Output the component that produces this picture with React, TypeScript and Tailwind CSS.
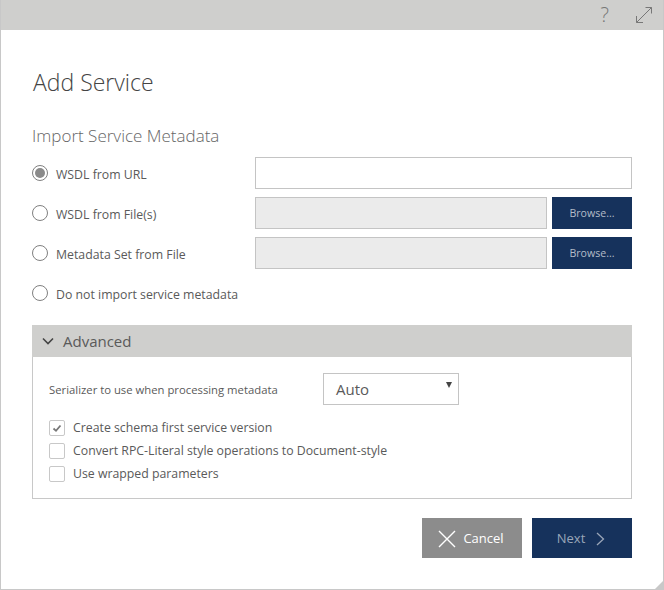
const font = { fontFamily: '"Open Sans", "Noto Sans", sans-serif' };

function Radio({ checked = false }: { checked?: boolean }) {
  return (
    <span className="flex h-4 w-4 shrink-0 items-center justify-center rounded-full border border-[#808080] bg-white">
      {checked && <span className="h-2.5 w-2.5 rounded-full bg-[#8a8a8a]" />}
    </span>
  );
}

function RadioRow({ label, checked, children }: { label: string; checked?: boolean; children?: React.ReactNode }) {
  return (
    <div className="flex h-8 items-center">
      <div className="flex w-[223px] shrink-0 items-center gap-2">
        <Radio checked={checked} />
        <span className="pt-[5px] text-[12.3px] text-[#5a5a5a]">{label}</span>
      </div>
      {children}
    </div>
  );
}

function FileRow({ label }: { label: string }) {
  return (
    <RadioRow label={label}>
      <div className="h-8 w-[292px] border border-[#c4c4c4] bg-[#ebebeb]" />
      <div className="ml-[5px] flex h-8 w-20 items-center justify-center bg-[#16325c] pt-[2px] text-[10.6px] text-[#b4bcc8]">Browse...</div>
    </RadioRow>
  );
}

function Check({ label, checked }: { label: string; checked?: boolean }) {
  return (
    <div className="flex h-[23px] items-center gap-2">
      <span className="flex h-4 w-4 shrink-0 items-center justify-center rounded-[2px] border border-[#c8c8c8] bg-white">
        {checked && (
          <svg width="10" height="10" viewBox="0 0 10 10" fill="none">
            <path d="M1.5 5.5 L4 7.8 L8.5 2.5" stroke="#777" strokeWidth="1.8" />
          </svg>
        )}
      </span>
      <span className="pt-[1px] text-[12.3px] text-[#5a5a5a]">{label}</span>
    </div>
  );
}

export default function App() {
  return (
    <div style={font} className="relative flex h-[590px] w-[664px] flex-col overflow-hidden border-b border-l border-r border-[#c8c8c8] bg-white">
      <div className="-mx-px flex h-[30px] shrink-0 items-center justify-end bg-[#cfcfcd] pr-[11px]">
        <span className="mr-[26px] text-[20px] font-light leading-none text-[#777]">?</span>
        <svg width="18" height="18" viewBox="0 0 18 18" fill="none" stroke="#777" strokeWidth="1">
          <path d="M1.5 16.5 L16.5 1.5 M10.5 1.5 H16.5 V7.5 M1.5 10 V16.5 H8" />
        </svg>
      </div>
      <div className="flex flex-1 flex-col px-[31px]">
        <h1 className="mt-[34px] pl-px text-[23px] font-light leading-9 text-[#444]">Add Service</h1>
        <h2 className="mt-[24px] text-[17px] font-light leading-6 text-[#666]">Import Service Metadata</h2>
        <div className="mt-[9px] flex flex-col gap-2">
          <RadioRow label="WSDL from URL" checked>
            <div className="h-8 w-[377px] border border-[#c4c4c4] bg-white" />
          </RadioRow>
          <FileRow label="WSDL from File(s)" />
          <FileRow label="Metadata Set from File" />
          <RadioRow label="Do not import service metadata" />
        </div>
        <div className="mt-4 flex h-8 items-center gap-2 bg-[#cfcfcd] pl-[9px]">
          <svg width="14" height="14" viewBox="0 0 14 14" fill="none" stroke="#444" strokeWidth="1.6">
            <path d="M2 4.5 L7 9.5 L12 4.5" />
          </svg>
          <span className="text-[15px] text-[#5a5a5a]">Advanced</span>
        </div>
        <div className="flex h-[142px] flex-col border-x border-b border-[#c8c8c8] px-4 pt-4">
          <div className="flex h-8 items-center">
            <span className="w-[274px] shrink-0 pt-[3px] text-[11.3px] text-[#5a5a5a]">Serializer to use when processing metadata</span>
            <div className="relative flex h-8 w-[136px] items-center border border-[#c4c4c4] pl-[12px] pt-[1px] text-[15px] text-[#5a5a5a]">
              Auto
              <span className="absolute right-[6px] top-[8px] h-0 w-0 border-x-[3.5px] border-t-[6px] border-x-transparent border-t-[#444]" />
            </div>
          </div>
          <div className="mt-[11px] flex flex-col">
            <Check label="Create schema first service version" checked />
            <Check label="Convert RPC-Literal style operations to Document-style" />
            <Check label="Use wrapped parameters" />
          </div>
        </div>
        <div className="mt-[19px] flex justify-end gap-2.5">
          <div className="flex h-10 w-[100px] items-center justify-center gap-[7px] bg-[#8c8c8c] pr-[2px] pt-[1px] text-[13px] text-white">
            <svg width="18" height="18" viewBox="0 0 18 18" fill="none" stroke="#fff" strokeWidth="1.4">
              <path d="M1 1 L17 17 M17 1 L1 17" />
            </svg>
            Cancel
          </div>
          <div className="flex h-10 w-[100px] items-center justify-center gap-[11px] bg-[#16325c] pr-[2px] pt-[1px] text-[13px] text-[#9aa6b8]">
            Next
            <svg width="9" height="14" viewBox="0 0 9 14" fill="none" stroke="#9aa6b8" strokeWidth="1.3">
              <path d="M1 1 L7.5 7 L1 13" />
            </svg>
          </div>
        </div>
      </div>
      <span className="absolute bottom-0 right-0 h-0 w-0 border-b-[8px] border-l-[8px] border-b-[#c8c8c8] border-l-transparent" />
    </div>
  );
}
